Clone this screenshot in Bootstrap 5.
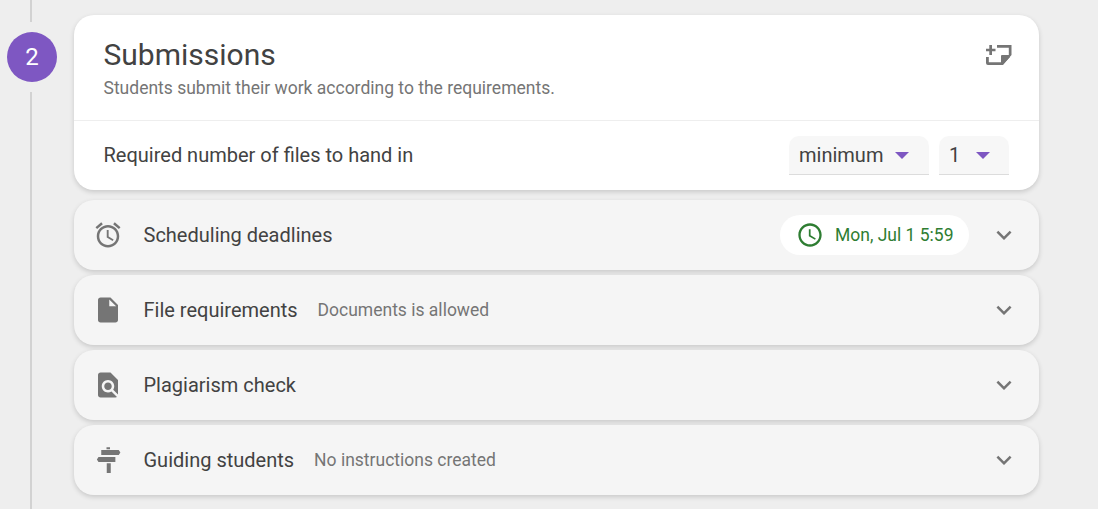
<!DOCTYPE html>
<html lang="en">
<head>
<meta charset="utf-8">
<title>Submissions</title>
<link href="https://cdn.jsdelivr.net/npm/bootstrap@5.3.0/dist/css/bootstrap.min.css" rel="stylesheet">
<style>
html,body{height:509px;overflow:hidden}
body{background:#eeeeee;font-family:Roboto,"Liberation Sans",sans-serif;color:#424242}
.stage{width:1098px;height:509px;padding-top:15px;padding-left:7px}
.rail{width:50px;margin-right:17px;height:524px;margin-top:-15px}
.rail-line{width:2px;background:#d2d2d2;margin-left:23px}
.rail-top{height:22px}
.rail-bottom{flex:1}
.step-num{width:50px;height:50px;background:#7e57c2;color:#fff;font-size:24px;margin:10px 0}
.stack{width:965px;gap:5px}
.main-panel{background:#fff;border-radius:20px;height:175px;box-shadow:0 2px 5px rgba(0,0,0,.16);margin-bottom:5px}
.head-area{height:106px;padding:21px 27px 0 29.5px;border-bottom:1px solid #eeeeee}
.title-text{font-size:30px;line-height:38px;font-weight:400;color:#424242;margin:0}
.sub-text{font-size:17.5px;line-height:20px;color:#757575;margin-top:4px}
.req-area{height:69px;padding:15px 30px 0 29.5px}
.req-label{font-size:20px;line-height:39px;color:#424242}
.pick{height:39px;background:#f7f7f7;border-radius:10px 10px 0 0;border-bottom:1px solid #dcdcdc;font-size:20px;color:#424242;padding:0 10px}
.pick-a{width:140px}
.pick-b{width:70px;margin-left:10px}
.tri{width:0;height:0;border-left:7px solid transparent;border-right:7px solid transparent;border-top:7px solid #7e57c2}
.pick-a .tri{margin-left:12px}
.pick-b .tri{margin-left:16px}
.fold{height:70px;background:#f5f5f5;border-radius:20px;box-shadow:0 2px 5px rgba(0,0,0,.16);padding:0 20px 0 19px}
.fold-icon{width:30px;height:30px;fill:#757575;flex:none}
.fold-title{font-size:20px;color:#424242;margin-left:20.5px}
.fold-note{font-size:17.5px;color:#757575;margin-left:20px}
.when{height:40px;width:189px;background:#fff;border-radius:20px;color:#2e7d32;font-size:17.5px;padding-left:16px;margin-right:20px}
.when svg{width:28px;height:28px;fill:#2e7d32;margin-right:11px}
.chev{width:30px;height:30px;fill:#757575;flex:none}
.add-note{width:30px;height:30px;fill:#757575;margin-top:4px;margin-right:-2px}
</style>
</head>
<body>
<div class="stage d-flex">
  <div class="rail d-flex flex-column">
    <div class="rail-line rail-top"></div>
    <div class="step-num rounded-circle d-flex align-items-center justify-content-center">2</div>
    <div class="rail-line rail-bottom"></div>
  </div>
  <div class="stack d-flex flex-column">
    <div class="main-panel">
      <div class="head-area d-flex justify-content-between">
        <div>
          <h1 class="title-text">Submissions</h1>
          <div class="sub-text">Students submit their work according to the requirements.</div>
        </div>
        <svg class="add-note" viewBox="0 0 30 30"><path d="M5.300 5h2.700v3.700h3.500v2.600H8v3.700H5.300v-3.700H2V8.700h3.300zM13 5h14.500v10l-8.500 10H4a2 2 0 0 1-2-2v-6h2.800v5.200h12.200V16a1 1 0 0 1 1-1h6.800V7.700H13z"/><path d="M19.500 17h6.500l-6.500 6.800z"/></svg>
      </div>
      <div class="req-area d-flex justify-content-between">
        <div class="req-label">Required number of files to hand in</div>
        <div class="d-flex">
          <div class="pick pick-a d-flex align-items-center"><span>minimum</span><span class="tri"></span></div>
          <div class="pick pick-b d-flex align-items-center"><span>1</span><span class="tri"></span></div>
        </div>
      </div>
    </div>
    <div class="fold d-flex align-items-center">
      <svg class="fold-icon" viewBox="0 0 24 24"><path d="M22 5.720l-4.600-3.860-1.290 1.530 4.600 3.860L22 5.720zM7.880 3.390L6.600 1.860 2 5.710l1.290 1.530 4.590-3.850zM12.500 8H11v6l4.750 2.850.75-1.230-4-2.370V8zM12 4c-4.970 0-9 4.030-9 9s4.030 9 9 9 9-4.030 9-9-4.030-9-9-9zm0 16c-3.870 0-7-3.130-7-7s3.130-7 7-7 7 3.130 7 7-3.130 7-7 7z"/></svg>
      <span class="fold-title">Scheduling deadlines</span>
      <div class="when d-flex align-items-center ms-auto">
        <svg viewBox="0 0 24 24"><path d="M11.990 2C6.470 2 2 6.480 2 12s4.470 10 9.990 10C17.520 22 22 17.520 22 12S17.520 2 11.990 2zM12 20c-4.420 0-8-3.580-8-8s3.580-8 8-8 8 3.580 8 8-3.580 8-8 8zm.5-13H11v6l5.250 3.150.75-1.230-4.500-2.670z"/></svg>
        <span>Mon, Jul 1 5:59</span>
      </div>
      <svg class="chev" viewBox="0 0 24 24"><path d="M16.590 8.590L12 13.170 7.410 8.590 6 10l6 6 6-6z"/></svg>
    </div>
    <div class="fold d-flex align-items-center">
      <svg class="fold-icon" viewBox="0 0 24 24"><path d="M6 2c-1.100 0-1.990.9-1.990 2L4 20c0 1.100.89 2 1.990 2H18c1.100 0 2-.9 2-2V8l-6-6H6zm7 7V3.500L18.500 9H13z"/></svg>
      <span class="fold-title">File requirements</span>
      <span class="fold-note">Documents is allowed</span>
      <svg class="chev ms-auto" viewBox="0 0 24 24"><path d="M16.590 8.590L12 13.170 7.410 8.590 6 10l6 6 6-6z"/></svg>
    </div>
    <div class="fold d-flex align-items-center">
      <svg class="fold-icon" viewBox="0 0 24 24"><path d="M20 19.590V8l-6-6H6c-1.100 0-1.990.9-1.990 2L4 20c0 1.100.89 2 1.990 2H18c.45 0 .85-.15 1.190-.4l-4.430-4.430c-.8.52-1.740.83-2.760.83-2.760 0-5-2.240-5-5s2.240-5 5-5 5 2.240 5 5c0 1.020-.31 1.960-.83 2.750L20 19.590zM9 13c0 1.660 1.340 3 3 3s3-1.340 3-3-1.340-3-3-3-3 1.340-3 3z"/></svg>
      <span class="fold-title">Plagiarism check</span>
      <svg class="chev ms-auto" viewBox="0 0 24 24"><path d="M16.590 8.590L12 13.170 7.410 8.590 6 10l6 6 6-6z"/></svg>
    </div>
    <div class="fold d-flex align-items-center">
      <svg class="fold-icon" viewBox="0 0 24 24"><path d="M10.800 1.800h2.800v1.600h-2.800zM6.600 4h14l1.300 2-1.300 2h-14zM4.400 9.600h13.500v4H4.400l-1.300-2zM11 14.600h3.200v7.800H11z"/></svg>
      <span class="fold-title">Guiding students</span>
      <span class="fold-note">No instructions created</span>
      <svg class="chev ms-auto" viewBox="0 0 24 24"><path d="M16.590 8.590L12 13.170 7.410 8.590 6 10l6 6 6-6z"/></svg>
    </div>
  </div>
</div>
</body>
</html>
